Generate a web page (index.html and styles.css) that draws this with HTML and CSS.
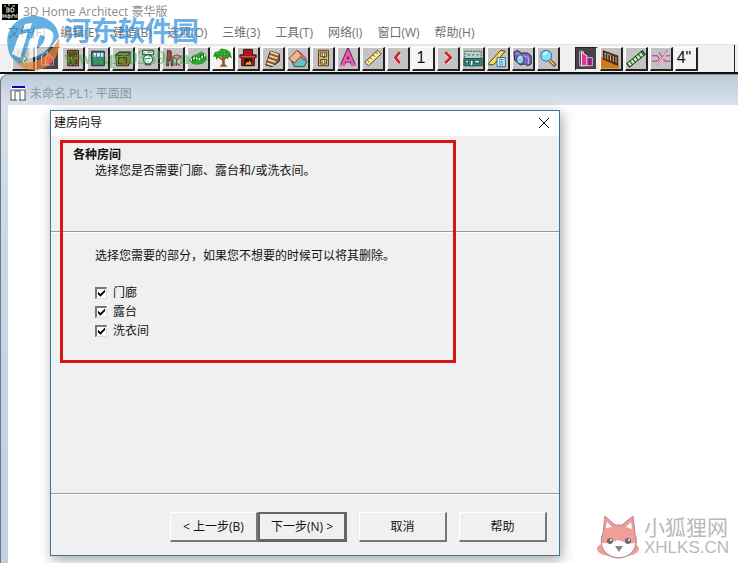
FILE: index.html
```
<!DOCTYPE html>
<html lang="zh-CN">
<head>
  <meta charset="UTF-8">
  <meta name="viewport" content="width=device-width, initial-scale=1.0">
  <title>3D Home Architect 豪华版</title>
  <link rel="stylesheet" href="styles.css">
</head>
<body>
  <!-- Title and menu -->
  <header class="titlebar">
    <svg class="app-icon" viewBox="0 0 16 16"><path fill="#000" d="M0 0h16v16H0z"/><path fill="none" stroke="#e8ecd8" d="M2 2h2M6 1h2M10 2h3M4 4h3v4H4M4 6h3M9 4v4h2l1-1V5l-1-1H9M1 10v4M4 10v4M1 12h3M6 11h2v3H6zM10 14v-3h3v3M14 11h2M14 13h2"/></svg>
    <span>3D Home Architect 豪华版</span>
  </header>
  <nav class="menu">
    <a href="#">文件(F)</a>
    <a href="#">编辑(E)</a>
    <a href="#">建造(B)</a>
    <a href="#">选项(O)</a>
    <a href="#">三维(3)</a>
    <a href="#">工具(T)</a>
    <a href="#">网络(I)</a>
    <a href="#">窗口(W)</a>
    <a href="#">帮助(H)</a>
  </nav>

  <!-- Toolbar -->
  <div class="toolbar">
    <button class="tool" aria-label="选择"><svg viewBox="0 0 22 22"><path fill="#fff59a" stroke="#6b6530" d="M6 3l10 9-4 1 4 6-3 1-3-6-3 3z"/></svg></button>
    <button class="tool pressed" aria-label="墙"><svg viewBox="0 0 22 22"><path fill="#444" stroke="#fff" d="M4 18V8l6-5v15z"/><path fill="#e83a9c" stroke="#fff" d="M8 18v-8l4-4 5 5v7z"/><path fill="#7b207b" d="M12 11h5v7h-5z"/></svg></button>
    <button class="tool" aria-label="门"><svg viewBox="0 0 22 22"><path fill="#a5713c" stroke="#2b1a0a" d="M5 2h12v17H5z"/><path stroke="#2b1a0a" d="M11 2v17"/><path fill="#277a35" stroke="#50300e" d="M7 4h2v5H7zM13 4h2v5h-2zM7 12h2v5H7zM13 12h2v5h-2z"/></svg></button>
    <button class="tool" aria-label="窗"><svg viewBox="0 0 22 22"><path fill="#3c70a0" stroke="#222" d="M4 3h14v16H4z"/><path fill="#d7f6f2" d="M6 5h3v4H6zM10 5h3v4h-3zM14 5h3v4h-3z"/><path fill="#319050" d="M6 10h3v3H6zM10 10h3v3h-3zM14 10h3v3h-3zM6 14h3v4H6zM10 14h3v4h-3zM14 14h3v4h-3z"/></svg></button>
    <button class="tool" aria-label="橱柜"><svg viewBox="0 0 22 22"><path fill="#c5a452" stroke="#24230b" d="M3 7l4-3h12l-2 4v11H4z"/><path fill="#5c9a49" stroke="#24230b" d="M3 7l4-3h12l-3 4H3z"/><path fill="#926d26" stroke="#24230b" d="M6 10h9v7H6zM16 8l3-3v11l-3 3"/></svg></button>
    <button class="tool" aria-label="洁具"><svg viewBox="0 0 22 22"><path fill="#fff" stroke="#222" d="M5 2h12v5H5zM8 7h6v11H8z"/><ellipse cx="11" cy="12" rx="5" ry="5" fill="#eff" stroke="#222"/><path stroke="#228b31" d="M8 11h6M10 4h2"/></svg></button>
    <button class="tool" aria-label="家具"><svg viewBox="0 0 22 22"><path fill="#9c4d42" stroke="#4f201c" d="M5 2l4 1v8h2v8H9v-6H6v6H4z"/><path fill="#ee8cac" stroke="#732546" d="M10 9l5-2 5 2-4 3zM15 12v7M12 19l3-3 4 3"/></svg></button>
    <button class="tool" aria-label="地形"><svg viewBox="0 0 22 22"><path fill="#29a829" d="M1 13l4-5 5-2 5-3 5 4 1 5-5 5-6 1-5-1z"/><path fill="none" stroke="#efffe0" stroke-width="2" d="M3 13l5-3 4 2 7-5"/><path stroke="#134b13" d="M5 9v5M8 8v5M11 9v4M14 7v5M17 6v5"/></svg></button>
    <button class="tool light" aria-label="植物"><svg viewBox="0 0 22 22"><path fill="#995b20" d="M10 8h3v9l3 3H7l3-3z"/><path stroke="#995b20" stroke-width="2" d="M11 13L5 8M12 12l5-5"/><path fill="#249b24" d="M0 9l2-5 4-1 3-3 6 1 4 3 2 7-3-2-2 3-3-4-3 2-3-2-3 5-1-4z"/><path stroke="#88d15c" stroke-dasharray="2 2" d="M4 6h13M7 3h8"/></svg></button>
    <button class="tool" aria-label="壁炉"><svg viewBox="0 0 22 22"><path fill="#a91820" stroke="#36100e" d="M6 1h10v6h4v3h-2v9H4v-9H2V7h4z"/><path fill="#1c0c08" d="M7 11h8v8H7z"/><path fill="#ffb21f" d="M8 18l2-4 1 2 2-3 2 5z"/><path stroke="#df6250" d="M3 9h16"/></svg></button>
    <button class="tool" aria-label="楼梯"><svg viewBox="0 0 22 22"><path fill="#855b39" stroke="#2c1a0d" d="M3 18L8 3l10 3v8l-8 6z"/><path stroke="#f5d7a3" stroke-width="2" d="M8 4l9 3M7 8l9 3M5 12l9 3M4 16l8 3"/></svg></button>
    <button class="tool" aria-label="屋顶"><svg viewBox="0 0 22 22"><path fill="#69bec1" stroke="#174c55" d="M4 14l8-7 9 7-3 6H7z"/><path fill="#f3b58c" stroke="#6b3420" d="M1 11l9-9 6 5-9 9z"/><path fill="#ed8069" stroke="#6b3420" d="M10 2l10 9-2 2-4-4"/></svg></button>
    <button class="tool" aria-label="电气"><svg viewBox="0 0 22 22"><path fill="#edc37b" stroke="#4a310b" d="M6 2h11v17H6z"/><path fill="#ffe7af" stroke="#4a310b" d="M8 4h7v5H8zM8 12h7v5H8z"/><path stroke="#222" d="M10 5v3M13 5v3M10 13v3M13 13v3M11 10h2"/></svg></button>
    <button class="tool" aria-label="文字"><svg viewBox="0 0 22 22"><path fill="none" stroke="#5b1746" stroke-width="5" d="M5 18L11 4l6 14M8 13h7"/><path fill="none" stroke="#ed5db3" stroke-width="3" d="M5 18L11 4l6 14M8 13h7M2 18h6M14 18h6"/></svg></button>
    <button class="tool" aria-label="尺寸"><svg viewBox="0 0 22 22"><path fill="#ffef8d" stroke="#413816" d="M2 15L16 2l4 4L6 19z"/><path stroke="#413816" d="M5 13l2 2M8 10l2 2M11 7l2 2M14 4l2 2"/></svg></button>
    <button class="tool" aria-label="上一层"><svg viewBox="0 0 22 22"><path fill="none" stroke="#fff" stroke-width="4" d="M13 5l-5 5 5 6"/><path fill="none" stroke="#cb2428" stroke-width="3" d="M13 4l-5 6 5 6"/></svg></button>
    <button class="tool light">1</button>
    <button class="tool" aria-label="下一层"><svg viewBox="0 0 22 22"><path fill="none" stroke="#fff" stroke-width="4" d="M9 5l5 5-5 6"/><path fill="none" stroke="#cb2428" stroke-width="3" d="M8 4l6 6-6 6"/></svg></button>
    <button class="tool" aria-label="立面"><svg viewBox="0 0 22 22"><path fill="#b9cfcb" stroke="#17524d" stroke-dasharray="2 1" d="M2 3h18v8H2z"/><path fill="#358c7d" stroke="#154a43" d="M1 11h20v8H1z"/><path fill="#dff" stroke="#154a43" d="M3 13h3v3H3zM13 13h5v3h-5z"/><path fill="#fff" stroke="#154a43" d="M8 13h3v6H8z"/><path stroke="#17524d" d="M5 7h3M10 7h2M15 7h2"/></svg></button>
    <button class="tool" aria-label="材料清单"><svg viewBox="0 0 22 22"><path fill="#f6da61" stroke="#3e3510" d="M1 16L14 2l5 1L6 18H1z"/><path fill="#dfffff" stroke="#24577e" d="M10 10h9v10h-9z"/><path stroke="#2377b2" d="M12 12h5M12 14h5M12 16h5M12 18h5"/></svg></button>
    <button class="tool" aria-label="相机"><svg viewBox="0 0 22 22"><path fill="#7c67b8" stroke="#251e4c" d="M1 4l4-2 4 3h7l4 3v9l-4 2-3-2-5 1-6-5z"/><path stroke="#c4b6ee" d="M3 5l14 5M17 10v7"/><ellipse cx="8" cy="12" rx="4" ry="5" fill="#90cce2" stroke="#163c63"/><path stroke="#fff" d="M6 11l3-2"/></svg></button>
    <button class="tool" aria-label="缩放"><svg viewBox="0 0 22 22"><path stroke="#643e18" stroke-width="4" d="M13 13l6 6"/><path stroke="#edc76b" stroke-width="2" d="M13 13l5 5"/><circle cx="9" cy="8" r="6" fill="#7de2f1" stroke="#215eaa"/><path stroke="#fff" stroke-width="2" d="M6 7l4-3"/></svg></button>
    <button class="tool pressed second" aria-label="直墙"><svg viewBox="0 0 22 22"><path fill="#444" stroke="#ddb0d4" d="M4 19V3h4v16z"/><path fill="#e23493" stroke="#fff" d="M6 19V4l6 4v11z"/><path fill="#8b2579" stroke="#eab2df" d="M12 10h6v9h-6z"/></svg></button>
    <button class="tool" aria-label="栏杆"><svg viewBox="0 0 22 22"><path fill="#d17c18" d="M0 9l20 10v3H0z"/><path stroke="#4b2b11" stroke-width="2" d="M2 3l17 6M2 11l17 7M3 3v9M6 4v9M9 5v9M12 6v10M15 8v10M18 9v9"/></svg></button>
    <button class="tool" aria-label="分隔线"><svg viewBox="0 0 22 22"><path stroke="#183318" stroke-width="6" d="M2 19L20 4"/><path stroke="#c4f5b4" stroke-width="4" stroke-dasharray="3 1" d="M3 18L19 5"/></svg></button>
    <button class="tool" aria-label="打断墙"><svg viewBox="0 0 22 22"><path fill="none" stroke="#a52e7b" d="M1 8h6l2 3-2 3H1M21 8h-5l-3 3 3 3h5M7 18L18 2M9 4l6 10"/><path stroke="#f3b0d7" stroke-width="2" d="M1 11h6M16 11h5M8 18L18 4"/></svg></button>
    <button class="tool light">4"</button>
    <span class="toolbar-end"></span>
  </div>

  <!-- Plan window -->
  <main class="plan">
    <div class="plan-title">
      <svg viewBox="0 0 16 15"><path fill="#fff" d="M1 1h14v13H1z"/><path fill="#0707b5" d="M2 0h13v2H2z"/><path fill="none" stroke="#555" d="M1 14V4h14v10M5 5v9M5 5h5v9M0 14h7M9 14h7"/></svg>
      <span>未命名.PL1: 平面图</span>
    </div>
    <div class="canvas">
      <form class="dialog" role="dialog" aria-labelledby="dialogTitle">
        <div class="dialog-title">
          <span id="dialogTitle">建房向导</span>
          <button type="button" class="close" aria-label="关闭"><svg viewBox="0 0 12 12"><path stroke="#111" d="M1 1l10 10M11 1L1 11"/></svg></button>
        </div>
        <div class="intro">
          <h1>各种房间</h1>
          <p>选择您是否需要门廊、露台和/或洗衣间。</p>
        </div>
        <div class="options">
          <p>选择您需要的部分，如果您不想要的时候可以将其删除。</p>
          <label><input type="checkbox" checked> 门廊</label>
          <label><input type="checkbox" checked> 露台</label>
          <label><input type="checkbox" checked> 洗衣间</label>
        </div>
        <div class="actions">
          <button type="button">&lt; 上一步(B)</button>
          <button type="button" class="default">下一步(N) &gt;</button>
          <button type="button" class="spaced">取消</button>
          <button type="button" class="spaced">帮助</button>
        </div>
        <div class="highlight"></div>
      </form>
    </div>
  </main>

  <!-- Site marks -->
  <div class="mark-top">
    <svg viewBox="0 0 56 56"><path fill="#258fd5" d="M3 34C-1 15 12 2 29 2c14 0 24 9 25 21L43 37 30 47l4-26-9 4-8 25C7 47 4 41 3 34z"/><path fill="#ee883c" d="M10 48c18 5 35-6 44-24 2 19-9 32-25 32-8 0-15-3-19-8z"/><path fill="#fff" d="M14 21l9-3-8 26-8-4zM20 10l7-1-2 6-7 1zM30 15c17-3 22 4 16 15-4 8-12 12-23 15l2-7c13-4 20-17 10-17l-5 16-7 2z"/></svg>
    <div class="mark-text">
      <strong>河东软件园</strong>
      <span>www.pc0359.cn</span>
    </div>
  </div>
  <div class="mark-bottom">
    <svg viewBox="0 0 44 44"><ellipse cx="22" cy="34" rx="21" ry="8" fill="#ef9e99"/><path fill="#ef9e99" stroke="#a98a8a" d="M7 18L9 1l10 9h7L37 1l2 18c4 9-1 23-16 24C8 43 2 29 7 18z"/><path fill="#fff" d="M10 13l1-6 5 5zM30 12l5-5 1 7zM6 28c6 1 11-1 16-3 6 2 11 4 17 3 0 8-7 14-16 14S6 36 6 28z"/><path fill="#8a7f86" d="M19 31h8l-4 6z"/><circle cx="14" cy="26" r="3" fill="#6e6870"/><circle cx="32" cy="26" r="3" fill="#6e6870"/><circle cx="15" cy="25" r="1" fill="#fff"/><circle cx="33" cy="25" r="1" fill="#fff"/></svg>
    <div class="mark-text">
      <strong>小狐狸网</strong>
      <span>XHLKS.CN</span>
    </div>
  </div>
</body>
</html>
```
FILE: styles.css
```
* {
  box-sizing: border-box;
}

body {
  margin: 0;
  min-height: 100vh;
  display: flex;
  flex-direction: column;
  position: relative;
  overflow: hidden;
  background: #fff;
  color: #111;
  font-family: "Open Sans", "Noto Sans CJK SC", sans-serif;
  font-size: 12px;
  line-height: 16px;
}

button {
  font: inherit;
  color: inherit;
  padding: 0;
  border: 0;
}

p, h1 {
  margin: 0;
  font-size: 12px;
}

.titlebar {
  display: flex;
  align-items: center;
  gap: 5px;
  height: 22px;
  padding: 2px 2px 0;
  color: #8c8c8c;
}

.app-icon {
  width: 16px;
  height: 16px;
}

.menu {
  display: flex;
  gap: 15px;
  height: 22px;
  padding: 3px 8px;
  white-space: nowrap;
}

.menu a {
  color: #707070;
  text-decoration: none;
}

.toolbar {
  display: flex;
  align-items: center;
  gap: 2px;
  height: 30px;
  padding: 0 3px 0 12px;
  background: #f0f0f0;
  border-top: 1px solid #e4e4e4;
  border-bottom: 2px solid #111;
}

.tool {
  flex: none;
  width: 23px;
  height: 24px;
  background: #c3c3c3;
  border: 1px solid #fff;
  border-right: 2px solid #222;
  border-bottom: 2px solid #222;
  font-family: "Liberation Sans", sans-serif;
  font-size: 16px;
}

.tool svg {
  display: block;
  width: 20px;
  height: 21px;
  fill: none;
}

.pressed {
  background: #444;
  border-color: #222 #eee #eee #222;
}

.light {
  background: #f4f4f4;
  padding-right: 4px;
}

.second {
  margin-left: 13px;
}

.toolbar-end {
  margin-left: auto;
  width: 1px;
  height: 27px;
  background: #222;
}

.plan {
  flex: 1;
  display: flex;
  flex-direction: column;
  padding-left: 7px;
  background: linear-gradient(#bccbdb, #d7e2ec 30px, #c9dae9 120px, #bdd0e4);
  border-left: 1px solid #777;
  border-top: 1px solid #8b949d;
  border-top-left-radius: 8px;
}

.plan-title {
  display: flex;
  align-items: center;
  gap: 4px;
  height: 30px;
  padding: 7px 0 0 2px;
  color: #8c969f;
}

.plan-title svg {
  width: 16px;
  height: 15px;
}

.canvas {
  flex: 1;
  display: flex;
  padding: 5px 178px 7px 42px;
  background: #fff;
}

.dialog {
  position: relative;
  flex: 1;
  display: flex;
  flex-direction: column;
  background: #f0f0f0;
  border: 1px solid #39789a;
  box-shadow: 2px 4px 12px rgba(0, 0, 0, 0.35);
}

.dialog-title {
  display: flex;
  align-items: center;
  justify-content: space-between;
  height: 25px;
  padding: 0 9px 1px 3px;
  background: #fff;
}

.close {
  background: none;
  width: 12px;
  height: 12px;
}

.close svg {
  display: block;
}

.intro {
  height: 96px;
  padding: 11px 22px;
  border-bottom: 1px solid #999;
  box-shadow: 0 1px #fff;
}

.intro p {
  padding-left: 22px;
}

.options {
  flex: 1;
  padding: 16px 44px;
}

.options p {
  margin-bottom: 19px;
}

.options label {
  display: flex;
  align-items: center;
  gap: 6px;
  width: max-content;
  height: 19px;
}

.options input {
  appearance: none;
  width: 12px;
  height: 12px;
  margin: 0;
  background: #fff;
  border: 1px solid #ddd;
  border-top: 2px solid #777;
  border-left: 2px solid #777;
}

.options input:checked::before {
  content: "";
  display: block;
  width: 9px;
  height: 9px;
  background: #000;
  clip-path: polygon(10% 35%, 38% 60%, 90% 10%, 90% 40%, 38% 92%, 10% 65%);
}

.actions {
  display: flex;
  justify-content: flex-end;
  height: 62px;
  padding: 18px 12px 13px;
  border-top: 1px solid #999;
  box-shadow: inset 0 1px #fff;
}

.actions button {
  width: 88px;
  height: 30px;
  background: #f0f0f0;
  border: 1px solid #fff;
  border-right: 2px solid #777;
  border-bottom: 2px solid #777;
}

.actions .default {
  width: 89px;
  border: 2px solid #666;
  border-right-width: 3px;
  border-bottom-width: 3px;
}

.actions .spaced {
  margin-left: 12px;
}

.highlight {
  position: absolute;
  left: 9px;
  top: 29px;
  width: 396px;
  height: 223px;
  border: 3px solid #d81414;
  pointer-events: none;
}

.mark-top,
.mark-bottom {
  position: absolute;
  display: flex;
  pointer-events: none;
  white-space: nowrap;
}

.mark-text {
  display: flex;
  flex-direction: column;
}

.mark-top {
  left: 5px;
  top: 14px;
  gap: 3px;
  opacity: 0.7;
}

.mark-top svg {
  width: 56px;
  height: 56px;
}

.mark-top strong {
  color: #2f91dc;
  font-size: 27px;
  line-height: 34px;
}

.mark-top span {
  color: #3fae49;
  font-family: "Liberation Serif", serif;
  font-size: 19px;
  font-weight: bold;
  line-height: 20px;
  opacity: 0.8;
}

.mark-bottom {
  right: 9px;
  bottom: 4px;
  gap: 4px;
  color: #b9b9bd;
}

.mark-bottom svg {
  width: 44px;
  height: 44px;
}

.mark-bottom strong {
  font-size: 21px;
  font-weight: normal;
  line-height: 24px;
}

.mark-bottom span {
  font-family: "Liberation Sans", sans-serif;
  font-size: 17px;
  line-height: 18px;
}
```
